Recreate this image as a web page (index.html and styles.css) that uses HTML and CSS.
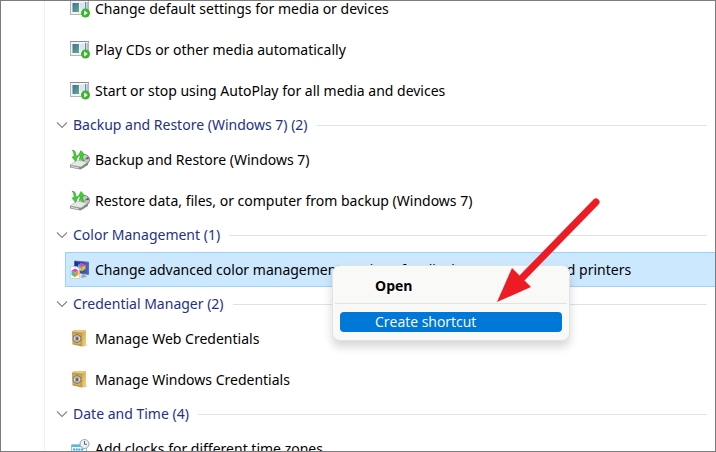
FILE: index.html
```
<!DOCTYPE html>
<html lang="en">

<head>
    <meta charset="UTF-8">
    <meta name="viewport" content="width=device-width, initial-scale=1.0">
    <title>All Tasks</title>
    <link rel="stylesheet" href="styles.css">
</head>

<body>

    <!-- Shared icons -->
    <svg class="sprite" aria-hidden="true">
        <defs>
            <linearGradient id="screen" x1="0" y1="0" x2="1" y2="1">
                <stop offset="0" stop-color="#3f6f9f"/>
                <stop offset="1" stop-color="#5fae86"/>
            </linearGradient>
            <linearGradient id="gold" x1="0" y1="0" x2="1" y2="1">
                <stop offset="0" stop-color="#cda652"/>
                <stop offset="1" stop-color="#f3d77c"/>
            </linearGradient>
            <linearGradient id="blue" x1="0" y1="0" x2="1" y2="0">
                <stop offset="0" stop-color="#10269c"/>
                <stop offset="1" stop-color="#3d6be0"/>
            </linearGradient>
        </defs>
        <symbol id="chevron" viewBox="0 0 12 8">
            <path d="M1 1.5L6 6.5L11 1.5" fill="none" stroke="#858585" stroke-width="1.1"/>
        </symbol>
        <symbol id="autoplay" viewBox="0 0 20 20">
            <rect x=".5" y="1.5" width="18" height="14" fill="#f2f3f5" stroke="#b3b5b8"/>
            <path d="M0 1.500h19" stroke="#8d8f92"/>
            <rect x="2.500" y="4" width="6.500" height="9" fill="url(#screen)"/>
            <rect x="10" y="4" width="4" height="6" fill="#dfe3ea"/>
            <path d="M15.500 3v7" stroke="#5b90c4" stroke-width="1.200"/>
            <path d="M17.200 3v7" stroke="#9da8a2"/>
            <circle cx="15.500" cy="14" r="4.500" fill="#3cb52b"/>
            <path d="M14.200 11.500L17.800 14L14.200 16.500z" fill="#fff"/>
        </symbol>
        <symbol id="backup" viewBox="0 0 20 20">
            <circle cx="14.5" cy="9.500" r="5" fill="#c9c9c9" stroke="#858585"/>
            <path d="M14.5 9.500L18 6.500L19 9z" fill="#5e5e5e"/>
            <path d="M0 15L7 10L18 12L11 17z" fill="#e7e7e7" stroke="#aaa" stroke-width=".6"/>
            <path d="M0 15L11 17L18 12V15L10.500 19.500L0 17.500z" fill="#888"/>
            <path d="M1 15.800L9 17.400V18.500L1 17z" fill="#dcdcdc"/>
            <path d="M12 17l2-1v1.200l-2 1z" fill="#35c22c"/>
            <path d="M2 0C5 0 6 2.500 6 6L8.500 5.500L5.500 11.500L2 7L4 6.500C4 3.500 3.500 1.500 2 0z" fill="#3ed02f" stroke="#279c22" stroke-width=".5"/>
            <path d="M11 .5L14.500 4.500L12.800 5C12.800 8 13 9.500 14.500 11C11 11 10 8.500 10 5.500L8 6z" fill="#3ed02f" stroke="#279c22" stroke-width=".5"/>
        </symbol>
        <symbol id="color" viewBox="0 0 20 20">
            <path d="M4.500 1L18.500 2.200V14.500L4.500 12z" fill="url(#blue)" stroke="#60656e" stroke-width=".8"/>
            <path d="M12 14L14.500 14.500L17 17L11 18z" fill="#a3a8ad"/>
            <path d="M11.500 3L8 5V9L11.500 7z" fill="#28d6ec"/>
            <path d="M11.500 3L15.500 5L11.500 7L8 5z" fill="#f33bbd"/>
            <path d="M11.500 7L15.500 5V9L11.500 11.500z" fill="#ffb01f"/>
            <path d="M8 9L11.500 7V11.500z" fill="#9aee2b"/>
            <path d="M.5 6.500H7L9.500 9V18.500H.5z" fill="#fff" stroke="#bbb" stroke-width=".6"/>
            <path d="M5 8.500L8.500 10.500L5 12.500L1.500 10.500z" fill="#ed38d1"/>
            <path d="M1.500 10.500L5 12.500V17L1.500 14.800z" fill="#20c1e8"/>
            <path d="M5 12.500L8.500 10.500V14.800L5 17z" fill="#ff8c22"/>
            <path d="M1.500 14.800L5 12.500V17z" fill="#48d63b"/>
        </symbol>
        <symbol id="safe" viewBox="0 0 20 20">
            <path d="M13 13l5 3.500l-5 1.500z" fill="#e3e1db"/>
            <path d="M2 2.500L5 1L16 1.500V15.500L12 17.500L2.500 15.500z" fill="#c49a43"/>
            <path d="M12 3.500L16 1.500V15.500L12 17.500z" fill="url(#gold)"/>
            <path d="M2 2.500L5 1L16 1.500L12 3.500z" fill="#e9cd83"/>
            <path d="M3.500 4.500L10.500 5.200V15.300L3.500 14z" fill="#d9b763"/>
            <circle cx="7" cy="9.500" r="4" fill="#ddd9cd" stroke="#77736a"/>
            <path d="M4.500 7L9.500 12M9.500 7L4.500 12M7 6V13" stroke="#77736a" stroke-width=".7"/>
            <circle cx="7" cy="9.500" r="1.500" fill="#66635c"/>
        </symbol>
        <symbol id="clock" viewBox="0 0 20 20">
            <path d="M1.500 6H16.500V18H1.500z" fill="#f4fbff" stroke="#9cc4d6"/>
            <path d="M1.500 5.500H13V8H1.500z" fill="#58b9d8"/>
            <path d="M3 10.500H14M3 13.500H14" stroke="#3ca9d4" stroke-width="2" stroke-dasharray="2 .7"/>
            <circle cx="14.500" cy="5" r="4.500" fill="#eef2f5" stroke="#9ba4aa"/>
            <path d="M14.500 2V5.300H17" fill="none" stroke="#5b6b7c"/>
        </symbol>
    </svg>

    <main class="window">
        <div class="tasks">
            <section class="group">
                <a class="task" href="#"><svg class="icon"><use href="#autoplay"/></svg>Change default settings for media or devices</a>
                <a class="task" href="#"><svg class="icon"><use href="#autoplay"/></svg>Play CDs or other media automatically</a>
                <a class="task" href="#"><svg class="icon"><use href="#autoplay"/></svg>Start or stop using AutoPlay for all media and devices</a>
            </section>

            <button type="button" class="group-title"><svg class="chevron"><use href="#chevron"/></svg>Backup and Restore (Windows 7) (2)</button>
            <section class="group">
                <a class="task" href="#"><svg class="icon"><use href="#backup"/></svg>Backup and Restore (Windows 7)</a>
                <a class="task" href="#"><svg class="icon"><use href="#backup"/></svg>Restore data, files, or computer from backup (Windows 7)</a>
            </section>

            <button type="button" class="group-title"><svg class="chevron"><use href="#chevron"/></svg>Color Management (1)</button>
            <section class="group">
                <a class="task selected" href="#"><svg class="icon"><use href="#color"/></svg>Change advanced color management settings for displays, scanners, and printers</a>
            </section>

            <button type="button" class="group-title"><svg class="chevron"><use href="#chevron"/></svg>Credential Manager (2)</button>
            <section class="group">
                <a class="task" href="#"><svg class="icon"><use href="#safe"/></svg>Manage Web Credentials</a>
                <a class="task" href="#"><svg class="icon"><use href="#safe"/></svg>Manage Windows Credentials</a>
            </section>

            <button type="button" class="group-title"><svg class="chevron"><use href="#chevron"/></svg>Date and Time (4)</button>
            <section class="group">
                <a class="task" href="#"><svg class="icon"><use href="#clock"/></svg>Add clocks for different time zones</a>
            </section>
        </div>

        <!-- Right-click menu -->
        <div class="menu" role="menu">
            <button type="button" class="menu-item default" role="menuitem">Open</button>
            <hr>
            <button type="button" class="menu-item active" role="menuitem">Create shortcut</button>
        </div>

        <svg class="arrow" viewBox="0 0 106 106" aria-hidden="true">
            <path d="M99 5L26 80" stroke="#ed1c24" stroke-width="7" stroke-linecap="round"/>
            <path d="M0 105L15 71L34 90z" fill="#ed1c24"/>
        </svg>
    </main>

</body>
</html>
```
FILE: styles.css
```
* {
    box-sizing: border-box;
}

body {
    font-family: "Noto Sans", "Open Sans", sans-serif;
    font-size: 14px;
    line-height: 20px;
    margin: 0;
    background: white;
    color: black;
}

.sprite {
    position: absolute;
    width: 0;
    height: 0;
}

.window {
    position: relative;
    height: 100vh;
    padding-left: 43px;
    border: 1px solid #7c7c7c;
    overflow: hidden;
}

/* List is scrolled part way down */
.tasks {
    margin-top: -10px;
    border-left: 1px solid #f0f0f0;
}

.group {
    display: flex;
    flex-direction: column;
    gap: 6px;
    padding-left: 20px;
}

.task {
    display: flex;
    align-items: center;
    gap: 5px;
    height: 35px;
    padding-left: 4px;
    border: 1px solid transparent;
    border-right: none;
    color: black;
    text-decoration: none;
    white-space: nowrap;
}

.task.selected {
    background: #cce8ff;
    border-color: #99d1ff;
}

.icon {
    width: 20px;
    height: 20px;
    flex: none;
}

.group-title {
    display: flex;
    align-items: center;
    width: 100%;
    height: 34px;
    padding: 0 8px 0 11px;
    border: none;
    background: none;
    color: #1e3287;
    font: inherit;
    white-space: nowrap;
}

.group-title::after {
    content: "";
    flex: 1;
    height: 1px;
    margin-left: 9px;
    background: #e2e2e2;
}

.chevron {
    width: 12px;
    height: 8px;
    margin-right: 5px;
}

.menu {
    position: absolute;
    top: 264px;
    left: 331px;
    width: 238px;
    padding: 7px 2px 8px;
    border: 1px solid #e3e3e3;
    border-radius: 8px;
    background: #f9f9f8;
    box-shadow: 0 6px 10px rgba(0, 0, 0, 0.16);
}

.menu hr {
    height: 1px;
    margin: 4px 0 8px;
    border: none;
    background: #e2e2e2;
}

.menu-item {
    display: block;
    width: calc(100% - 10px);
    margin: 0 5px;
    padding: 0 35px;
    border: none;
    border-radius: 4px;
    background: none;
    font: inherit;
    font-family: "Open Sans", "Noto Sans", sans-serif;
    text-align: left;
}

.menu-item.default {
    padding-top: 3px;
    padding-bottom: 3px;
    font-weight: bold;
}

.menu-item.active {
    background: #0078d7;
    color: white;
}

.arrow {
    position: absolute;
    top: 196px;
    left: 496px;
    width: 106px;
    height: 106px;
}
```
